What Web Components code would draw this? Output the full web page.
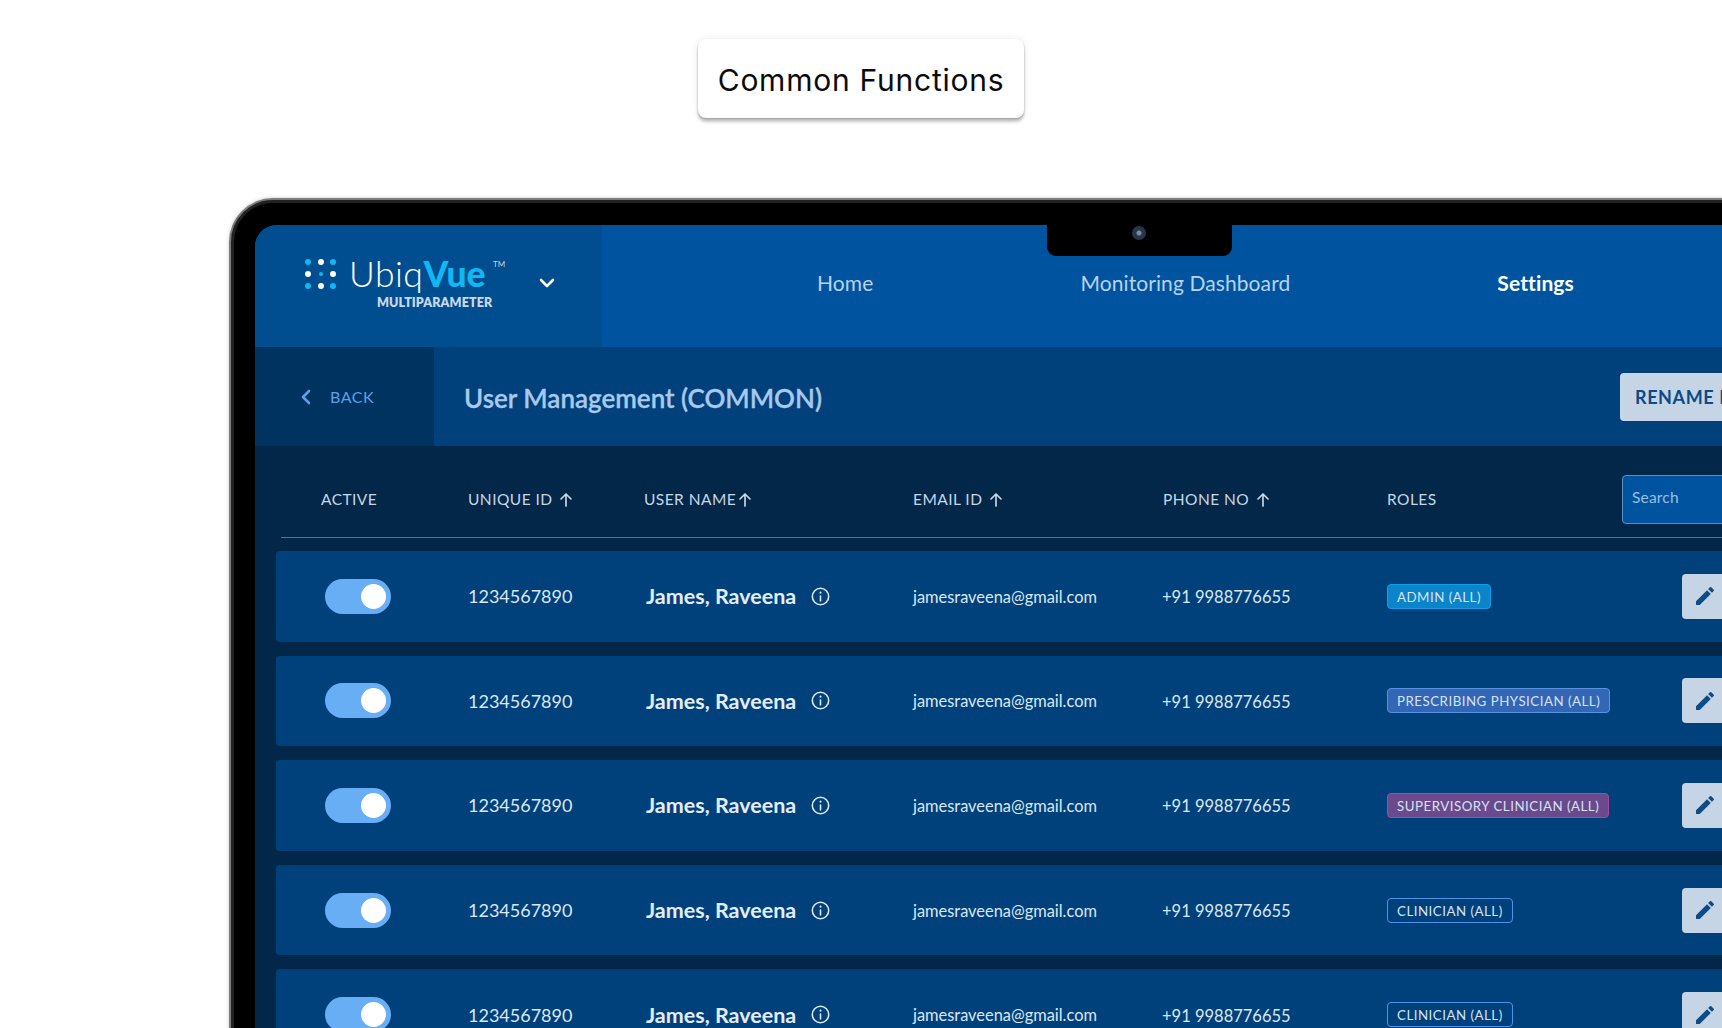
<!DOCTYPE html>
<html>
<head>
<meta charset="utf-8">
<title>Common Functions</title>
<style>
html, body { margin: 0; padding: 0; height: 100%; overflow: hidden; background: #fff; }
body { font-family: Lato, "Open Sans", sans-serif; width: 1722px; height: 1028px; }
</style>
</head>
<body>
<title-card>Common Functions</title-card>
<laptop-frame>
	<top-bar></top-bar>
	<sub-bar heading="User Management (COMMON)"></sub-bar>
	<user-table>
		<user-row tag="admin">ADMIN (ALL)</user-row>
		<user-row tag="prescribing">PRESCRIBING PHYSICIAN (ALL)</user-row>
		<user-row tag="supervisory">SUPERVISORY CLINICIAN (ALL)</user-row>
		<user-row tag="clinician">CLINICIAN (ALL)</user-row>
		<user-row tag="clinician">CLINICIAN (ALL)</user-row>
	</user-table>
</laptop-frame>

<script>
class TitleCard extends HTMLElement {
	constructor() {
		super();
		this.attachShadow({ mode: "open" });
		this.shadowRoot.innerHTML = `
    <style>
    :host {
      display: block;
      box-sizing: border-box;
      width: 326px;
      height: 79px;
      margin: 39px auto 0;
      padding-top: 4px;
      background: #fff;
      border-radius: 8px;
      box-shadow: 0 1px 2px rgba(0,0,0,.22), 0 4px 3px rgba(0,0,0,.2), 0 0 10px rgba(0,0,0,.07);
      font: 400 30px/75px Inter, sans-serif;
      letter-spacing: .75px;
      color: #0b0b0b;
      text-align: center;
    }
    </style>
    <slot></slot>`;
	}
}
customElements.define("title-card", TitleCard);

class LaptopFrame extends HTMLElement {
	constructor() {
		super();
		this.attachShadow({ mode: "open" });
		this.shadowRoot.innerHTML = `
    <style>
    :host {
      display: block;
      box-sizing: border-box;
      width: 1600px;
      height: 900px;
      margin: 82px 0 0 231px;
      padding: 22px 0 0 21px;
      background: #000;
      border: 3px solid #222;
      border-radius: 42px 42px 0 0;
      box-shadow: 0 0 0 2px #7c7c7c, 0 0 3px 3px rgba(0,0,0,.12);
      position: relative;
    }
    #screen {
      height: 100%;
      border-radius: 22px 22px 0 0;
      overflow: hidden;
      background: #032748;
    }
    #notch {
      position: absolute;
      left: 813px;
      top: 22px;
      width: 185px;
      height: 31px;
      background: #000;
      border-radius: 0 0 9px 9px;
    }
    #notch i {
      position: absolute;
      left: 85px;
      top: 1px;
      width: 14px;
      height: 14px;
      border-radius: 50%;
      background: radial-gradient(circle, #7d8c9c 0 2px, #26374a 3px 100%);
    }
    </style>
    <div id="screen"><slot></slot></div>
    <div id="notch"><i></i></div>`;
	}
}
customElements.define("laptop-frame", LaptopFrame);

class TopBar extends HTMLElement {
	constructor() {
		super();
		this.attachShadow({ mode: "open" });
		this.shadowRoot.innerHTML = `
    <style>
    :host {
      display: flex;
      height: 122px;
      background: #00549f;
      font-size: 21px;
      letter-spacing: .1px;
      color: #b9d2ec;
    }
    #brand {
      box-sizing: border-box;
      width: 347px;
      background: #004d90;
      display: flex;
      align-items: flex-start;
      padding: 34px 0 0 50px;
      color: #fff;
    }
    #dots { display: block; }
    #word { margin-left: 12px; width: 152px; }
    #name { font-size: 35.500px; line-height: 38px; font-weight: 300; letter-spacing: .5px; white-space: nowrap; position: relative; margin-top: -4px; }
    #name b { color: #0fb8f2; font-weight: 900; letter-spacing: 0; }
    #name sup { position: absolute; left: 144px; top: 4px; font-size: 8px; line-height: 10px; font-weight: 400; letter-spacing: 0; color: #c5d5e8; }
    #sub { font-size: 12.500px; line-height: 14px; font-weight: 800; letter-spacing: .1px; color: #c9d8e8; margin: 3px 0 0 28px; white-space: nowrap; }
    #chev { margin: 19px 0 0 38px; }
    nav {
      display: flex;
      gap: 207px;
      align-items: center;
      padding: 0 0 0 215px;
      height: 115px;
      white-space: nowrap;
    }
    nav .on { color: #fff; font-weight: 700; }
    </style>
    <div id="brand">
      <svg id="dots" width="32" height="32" viewBox="0 0 32 32">
        <g fill="#0fb8f2"><circle cx="3" cy="3" r="3"/><circle cx="28" cy="3" r="3"/><circle cx="3" cy="27" r="3"/><circle cx="28" cy="27" r="3"/><circle cx="16" cy="15" r="2"/></g>
        <g fill="#fff"><circle cx="16" cy="3" r="3"/><circle cx="3" cy="15" r="3"/><circle cx="28" cy="15" r="3"/><circle cx="16" cy="27" r="3"/></g>
      </svg>
      <div id="word">
        <div id="name">Ubiq<b>Vue</b><sup>TM</sup></div>
        <div id="sub">MULTIPARAMETER</div>
      </div>
      <svg id="chev" width="16" height="10" viewBox="0 0 16 10" fill="none" stroke="#fff" stroke-width="2.600" stroke-linecap="round" stroke-linejoin="round"><path d="M2 2l6 6 6-6"/></svg>
    </div>
    <nav>
      <span>Home</span>
      <span>Monitoring Dashboard</span>
      <span class="on">Settings</span>
    </nav>`;
	}
}
customElements.define("top-bar", TopBar);

class SubBar extends HTMLElement {
	constructor() {
		super();
		this.attachShadow({ mode: "open" });
		this.shadowRoot.innerHTML = `
    <style>
    :host {
      display: flex;
      align-items: stretch;
      height: 99px;
      background: #00407b;
    }
    #back {
      box-sizing: border-box;
      width: 179px;
      background: #00335f;
      display: flex;
      align-items: center;
      padding-left: 46px;
      gap: 19px;
      color: #5f9fe4;
      font-size: 16px;
      letter-spacing: .5px;
    }
    h1 {
      margin: 2px 0 0 30px;
      flex: 1;
      align-self: center;
      font-size: 26px;
      font-weight: 600;
      -webkit-text-stroke: .3px #a9c9ec;
      color: #a9c9ec;
      white-space: nowrap;
    }
    button {
      align-self: center;
      width: 208px;
      height: 48px;
      padding: 0 0 0 15px;
      text-align: left;
      font: 700 18px Lato, sans-serif;
      letter-spacing: .6px;
      color: #0c4a86;
      background: #c5d5e5;
      border: none;
      border-radius: 4px 0 0 4px;
    }
    </style>
    <div id="back">
      <svg width="10" height="16" viewBox="0 0 10 16" fill="none" stroke="#5f9fe4" stroke-width="2.600" stroke-linecap="round" stroke-linejoin="round"><path d="M8 2L2 8l6 6"/></svg>
      <span>BACK</span>
    </div>
    <h1></h1>
    <button>RENAME ROLES</button>`;
		this.shadowRoot.querySelector("h1").textContent = this.getAttribute("heading");
	}
}
customElements.define("sub-bar", SubBar);

const ARROW = `<svg width="14" height="15" viewBox="0 0 14 15" fill="none" stroke="#c6d6e6" stroke-width="1.700" stroke-linecap="round" stroke-linejoin="round"><path d="M7 14V2M2 7l5-5 5 5"/></svg>`;

class UserTable extends HTMLElement {
	constructor() {
		super();
		this.attachShadow({ mode: "open" });
		this.shadowRoot.innerHTML = `
    <style>
    :host {
      display: block;
      padding: 0 0 0 21px;
      background: #032748;
    }
    #head {
      display: grid;
      grid-template-columns: 187px 176px 269px 250px 224px 235px 1fr;
      align-items: center;
      box-sizing: border-box;
      height: 92px;
      padding-top: 15px;
      margin-left: 5px;
      border-bottom: 1px solid #5d7288;
      font-size: 15.500px;
      letter-spacing: .45px;
      color: #c6d6e6;
    }
    #head span { display: flex; align-items: center; gap: 7px; white-space: nowrap; }
    #head span:first-child { padding-left: 40px; }
    #head .tight { gap: 2px; }
    #search {
      box-sizing: border-box;
      width: 120px;
      height: 49px;
      padding: 0 0 4px 9px;
      display: flex;
      align-items: center;
      background: #00549f;
      border: 1px solid #5c8cc2;
      border-radius: 4px 0 0 4px;
      color: #9dbde0;
      font-size: 15.500px;
      letter-spacing: .2px;
    }
    #rows {
      display: flex;
      flex-direction: column;
      gap: 14px;
      padding-top: 13px;
    }
    </style>
    <div id="head">
      <span>ACTIVE</span>
      <span>UNIQUE ID ${ARROW}</span>
      <span class="tight">USER NAME ${ARROW}</span>
      <span>EMAIL ID ${ARROW}</span>
      <span>PHONE NO ${ARROW}</span>
      <span>ROLES</span>
      <div id="search">Search</div>
    </div>
    <div id="rows"><slot></slot></div>`;
	}
}
customElements.define("user-table", UserTable);

const TAG_COLORS = {
	admin: "background:#0b84c9;border-color:#0fa0e8",
	prescribing: "background:#3366b5;border-color:#5a92e2",
	supervisory: "background:#6a4a8d;border-color:#a34b9b",
	clinician: "background:#00417c;border-color:#4f94e8",
};

class UserRow extends HTMLElement {
	constructor() {
		super();
		this.attachShadow({ mode: "open" });
		const tag = this.getAttribute("tag");
		this.shadowRoot.innerHTML = `
    <style>
    :host {
      display: grid;
      grid-template-columns: 192px 176px 268px 251px 224px 295px 60px;
      align-items: center;
      box-sizing: border-box;
      width: 1560px;
      height: 90.600px;
      background: #00417c;
      border-radius: 4px 0 0 4px;
      color: #dbe6f1;
      white-space: nowrap;
    }
    #toggle {
      position: relative;
      width: 66px;
      height: 35px;
      margin-left: 49px;
      border-radius: 18px;
      background: #68aef5;
    }
    #toggle i {
      position: absolute;
      right: 5px;
      top: 5px;
      width: 25px;
      height: 25px;
      border-radius: 50%;
      background: #fff;
    }
    #uid { font-size: 18px; }
    #name { display: flex; align-items: center; gap: 15px; font-size: 21.500px; font-weight: 700; color: #e4edf5; margin-left: 2px; }
    #mail { font-size: 16.400px; margin-left: 1px; }
    #phone { font-size: 16.500px; padding-top: 2px; margin-left: -1px; }
    #tag {
      justify-self: start;
      box-sizing: border-box;
      height: 25px;
      padding: 0 9px;
      line-height: 24px;
      border: 1px solid;
      border-radius: 4px;
      font-size: 13.300px;
      letter-spacing: .5px;
      color: #d5e3f1;
      ${TAG_COLORS[tag]};
    }
    #edit {
      box-sizing: border-box;
      width: 60px;
      height: 45px;
      padding: 0 0 0 11px;
      display: flex;
      align-items: center;
      background: #c5d5e5;
      border-radius: 4px 0 0 4px;
    }
    </style>
    <div><div id="toggle"><i></i></div></div>
    <div id="uid">1234567890</div>
    <div id="name">James, Raveena
      <svg width="19" height="19" viewBox="0 0 19 19" fill="none" stroke="#dbe6f1" stroke-width="1.600" stroke-linecap="round"><circle cx="9.500" cy="9.500" r="8.200"/><path d="M9.500 9v5"/><path d="M9.500 5.400v.3" stroke-width="2"/></svg>
    </div>
    <div id="mail">jamesraveena@gmail.com</div>
    <div id="phone">+91 9988776655</div>
    <div id="tag"><slot></slot></div>
    <div id="edit">
      <svg width="24" height="24" viewBox="0 0 24 24" fill="#0f4c86"><path d="M3 17.250V21h3.750L17.810 9.940l-3.750-3.750L3 17.250zM20.710 7.040a1 1 0 0 0 0-1.410l-2.340-2.340a1 1 0 0 0-1.410 0l-1.830 1.830 3.750 3.750 1.830-1.830z"/></svg>
    </div>`;
	}
}
customElements.define("user-row", UserRow);
</script>
</body>
</html>
